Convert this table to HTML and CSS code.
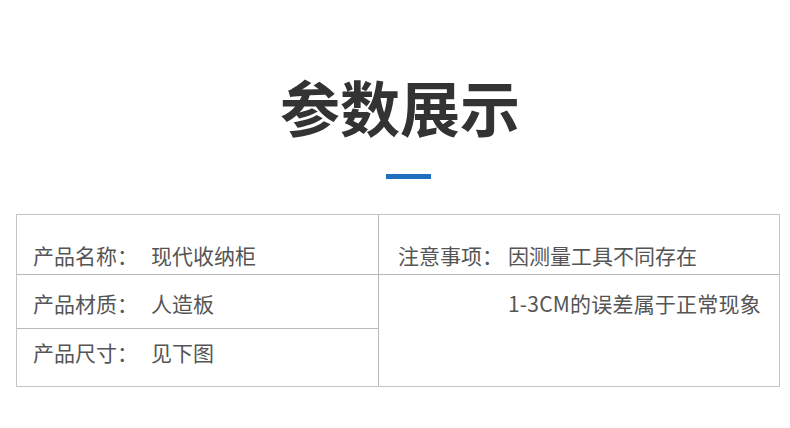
FILE: index.html
```html
<!DOCTYPE html>
<html lang="zh">
<head>
<meta charset="utf-8">
<link rel="stylesheet" href="styles.css">
</head>
<body>
<div class="page">
  <h1 class="title">参数展示</h1>
  <div class="bar"></div>
  <div class="table">
    <div class="col left">
      <div class="cell r1"><span class="label">产品名称：</span><span class="value">现代收纳柜</span></div>
      <div class="cell r2"><span class="label">产品材质：</span><span class="value">人造板</span></div>
      <div class="cell r3"><span class="label">产品尺寸：</span><span class="value">见下图</span></div>
    </div>
    <div class="col right">
      <div class="cell r1"><span class="label">注意事项：</span><span class="value v2">因测量工具不同存在</span></div>
      <div class="cell rr"><span class="value v3">1-3CM的误差属于正常现象</span></div>
    </div>
  </div>
</div>
</body>
</html>
```

FILE: styles.css
```css
* { box-sizing: border-box; }
html, body { margin: 0; padding: 0; background: #fff; }
body {
  width: 790px;
  height: 428px;
  overflow: hidden;
  font-family: "Noto Sans CJK SC", "Noto Sans", sans-serif;
}
.page { display: flex; flex-direction: column; align-items: center; padding-top: 69px; }
.title {
  margin: 0 0 0 10px;
  font-size: 60px;
  line-height: 74px;
  font-weight: 700;
  color: #333;
  letter-spacing: 0;
}
.bar {
  width: 45px;
  height: 5px;
  background: #1f6fc0;
  margin-top: 31px;
  margin-left: 27px;
}
.table {
  align-self: flex-start;
  margin-top: 35px;
  margin-left: 16px;
  width: 764px;
  height: 173px;
  border: 1px solid #c4c4c4;
  display: grid;
  grid-template-columns: 362px 1fr;
}
.col { display: flex; flex-direction: column; }
.left { border-right: 1px solid #b8b8b8; }
.cell {
  display: flex;
  align-items: flex-end;
  font-size: 21px;
  color: #555;
  line-height: 28px;
}
.r1 { height: 60px; border-bottom: 1px solid #b8b8b8; padding-bottom: 5px; }
.r2 { height: 54px; border-bottom: 1px solid #b8b8b8; padding-bottom: 11px; }
.r3 { flex: 1; align-items: center; padding-bottom: 12px; }
.rr { flex: 1; padding-top: 14px; align-items: flex-start; }
.left .cell { padding-left: 16px; }
.right .cell { padding-left: 19px; }
.label { width: 118px; flex: none; }
.right .label { width: 110px; }
.v3 { margin-left: 110px; letter-spacing: 0.2px; }
```
